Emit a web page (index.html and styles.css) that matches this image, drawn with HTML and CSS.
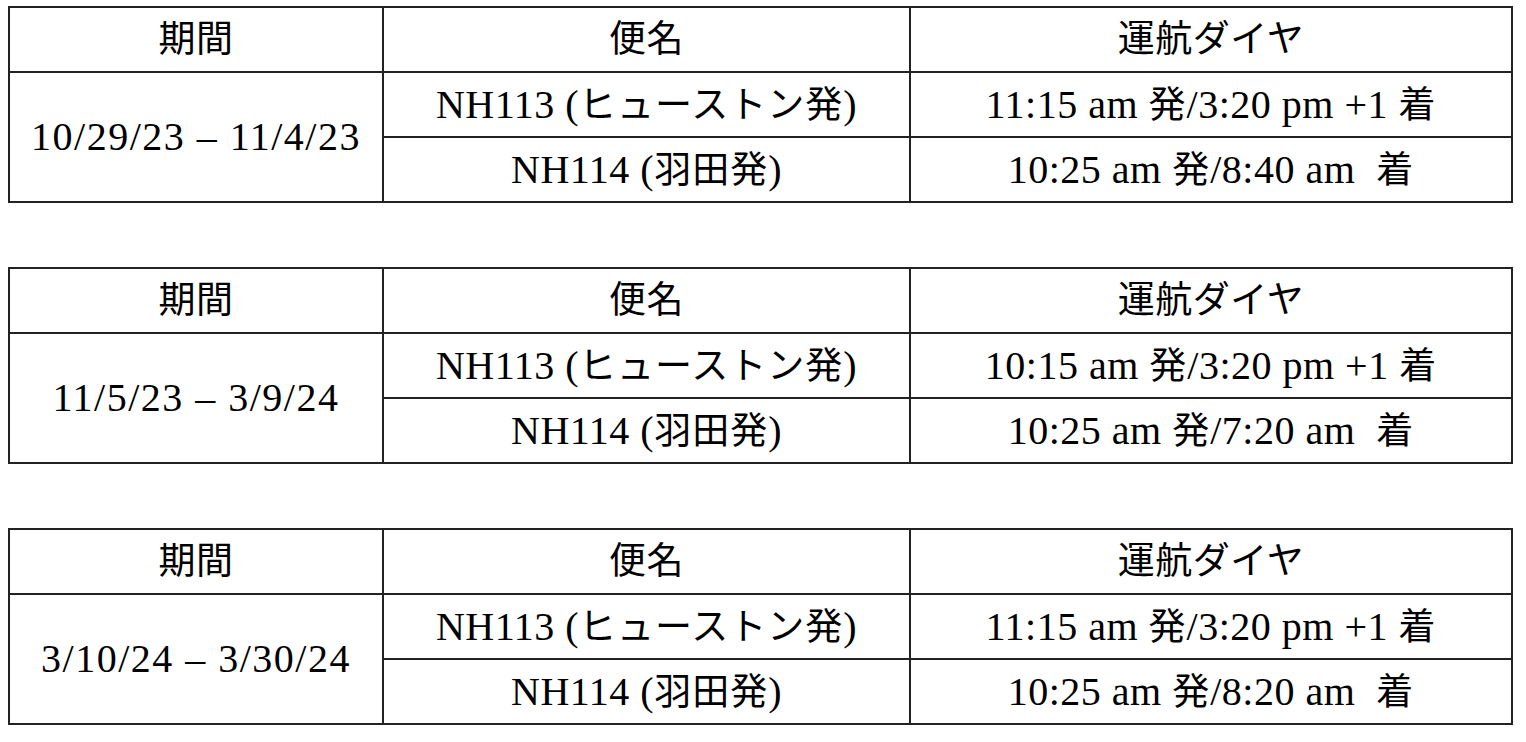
FILE: index.html
```html
<!DOCTYPE html>
<html lang="ja">
<head>
<meta charset="utf-8">
<link rel="stylesheet" href="styles.css">
</head>
<body>
<table class="schedule">
  <tr><td class="c1 ja">期間</td><td class="c2 ja">便名</td><td class="c3 ja">運航ダイヤ</td></tr>
  <tr><td class="period" rowspan="2">10/29/23 – 11/4/23</td><td>NH113 (<span class="ja">ヒューストン発</span>)</td><td>11:15 am <span class="ja">発</span>/3:20 pm +1 <span class="ja">着</span></td></tr>
  <tr><td>NH114 (<span class="ja">羽田発</span>)</td><td>10:25 am <span class="ja">発</span>/8:40 am&nbsp; <span class="ja">着</span></td></tr>
</table>
<table class="schedule">
  <tr><td class="c1 ja">期間</td><td class="c2 ja">便名</td><td class="c3 ja">運航ダイヤ</td></tr>
  <tr><td class="period" rowspan="2">11/5/23 – 3/9/24</td><td>NH113 (<span class="ja">ヒューストン発</span>)</td><td>10:15 am <span class="ja">発</span>/3:20 pm +1 <span class="ja">着</span></td></tr>
  <tr><td>NH114 (<span class="ja">羽田発</span>)</td><td>10:25 am <span class="ja">発</span>/7:20 am&nbsp; <span class="ja">着</span></td></tr>
</table>
<table class="schedule">
  <tr><td class="c1 ja">期間</td><td class="c2 ja">便名</td><td class="c3 ja">運航ダイヤ</td></tr>
  <tr><td class="period" rowspan="2">3/10/24 – 3/30/24</td><td>NH113 (<span class="ja">ヒューストン発</span>)</td><td>11:15 am <span class="ja">発</span>/3:20 pm +1 <span class="ja">着</span></td></tr>
  <tr><td>NH114 (<span class="ja">羽田発</span>)</td><td>10:25 am <span class="ja">発</span>/8:20 am&nbsp; <span class="ja">着</span></td></tr>
</table>
</body>
</html>
```
FILE: styles.css
```css
body {
  margin: 6px 8px 0;
  background: #fff;
  color: #000;
  font-family: "Liberation Serif", "Noto Sans CJK JP", serif;
  font-size: 40px;
}
.schedule {
  border-collapse: collapse;
  width: 1497px;
  margin-bottom: 64px;
  table-layout: fixed;
}
.schedule:last-child {
  margin-bottom: 0;
}
.schedule td {
  border: 2px solid #222;
  height: 63px;
  padding: 0;
  text-align: center;
  vertical-align: middle;
  line-height: 1;
  letter-spacing: 0.5px;
}
.schedule td.period {
  letter-spacing: 1.5px;
}
.ja {
  font-size: 37px;
  letter-spacing: 1px;
}
.c1 { width: 372px; }
.c2 { width: 525px; }
.c3 { width: 600px; }
```
